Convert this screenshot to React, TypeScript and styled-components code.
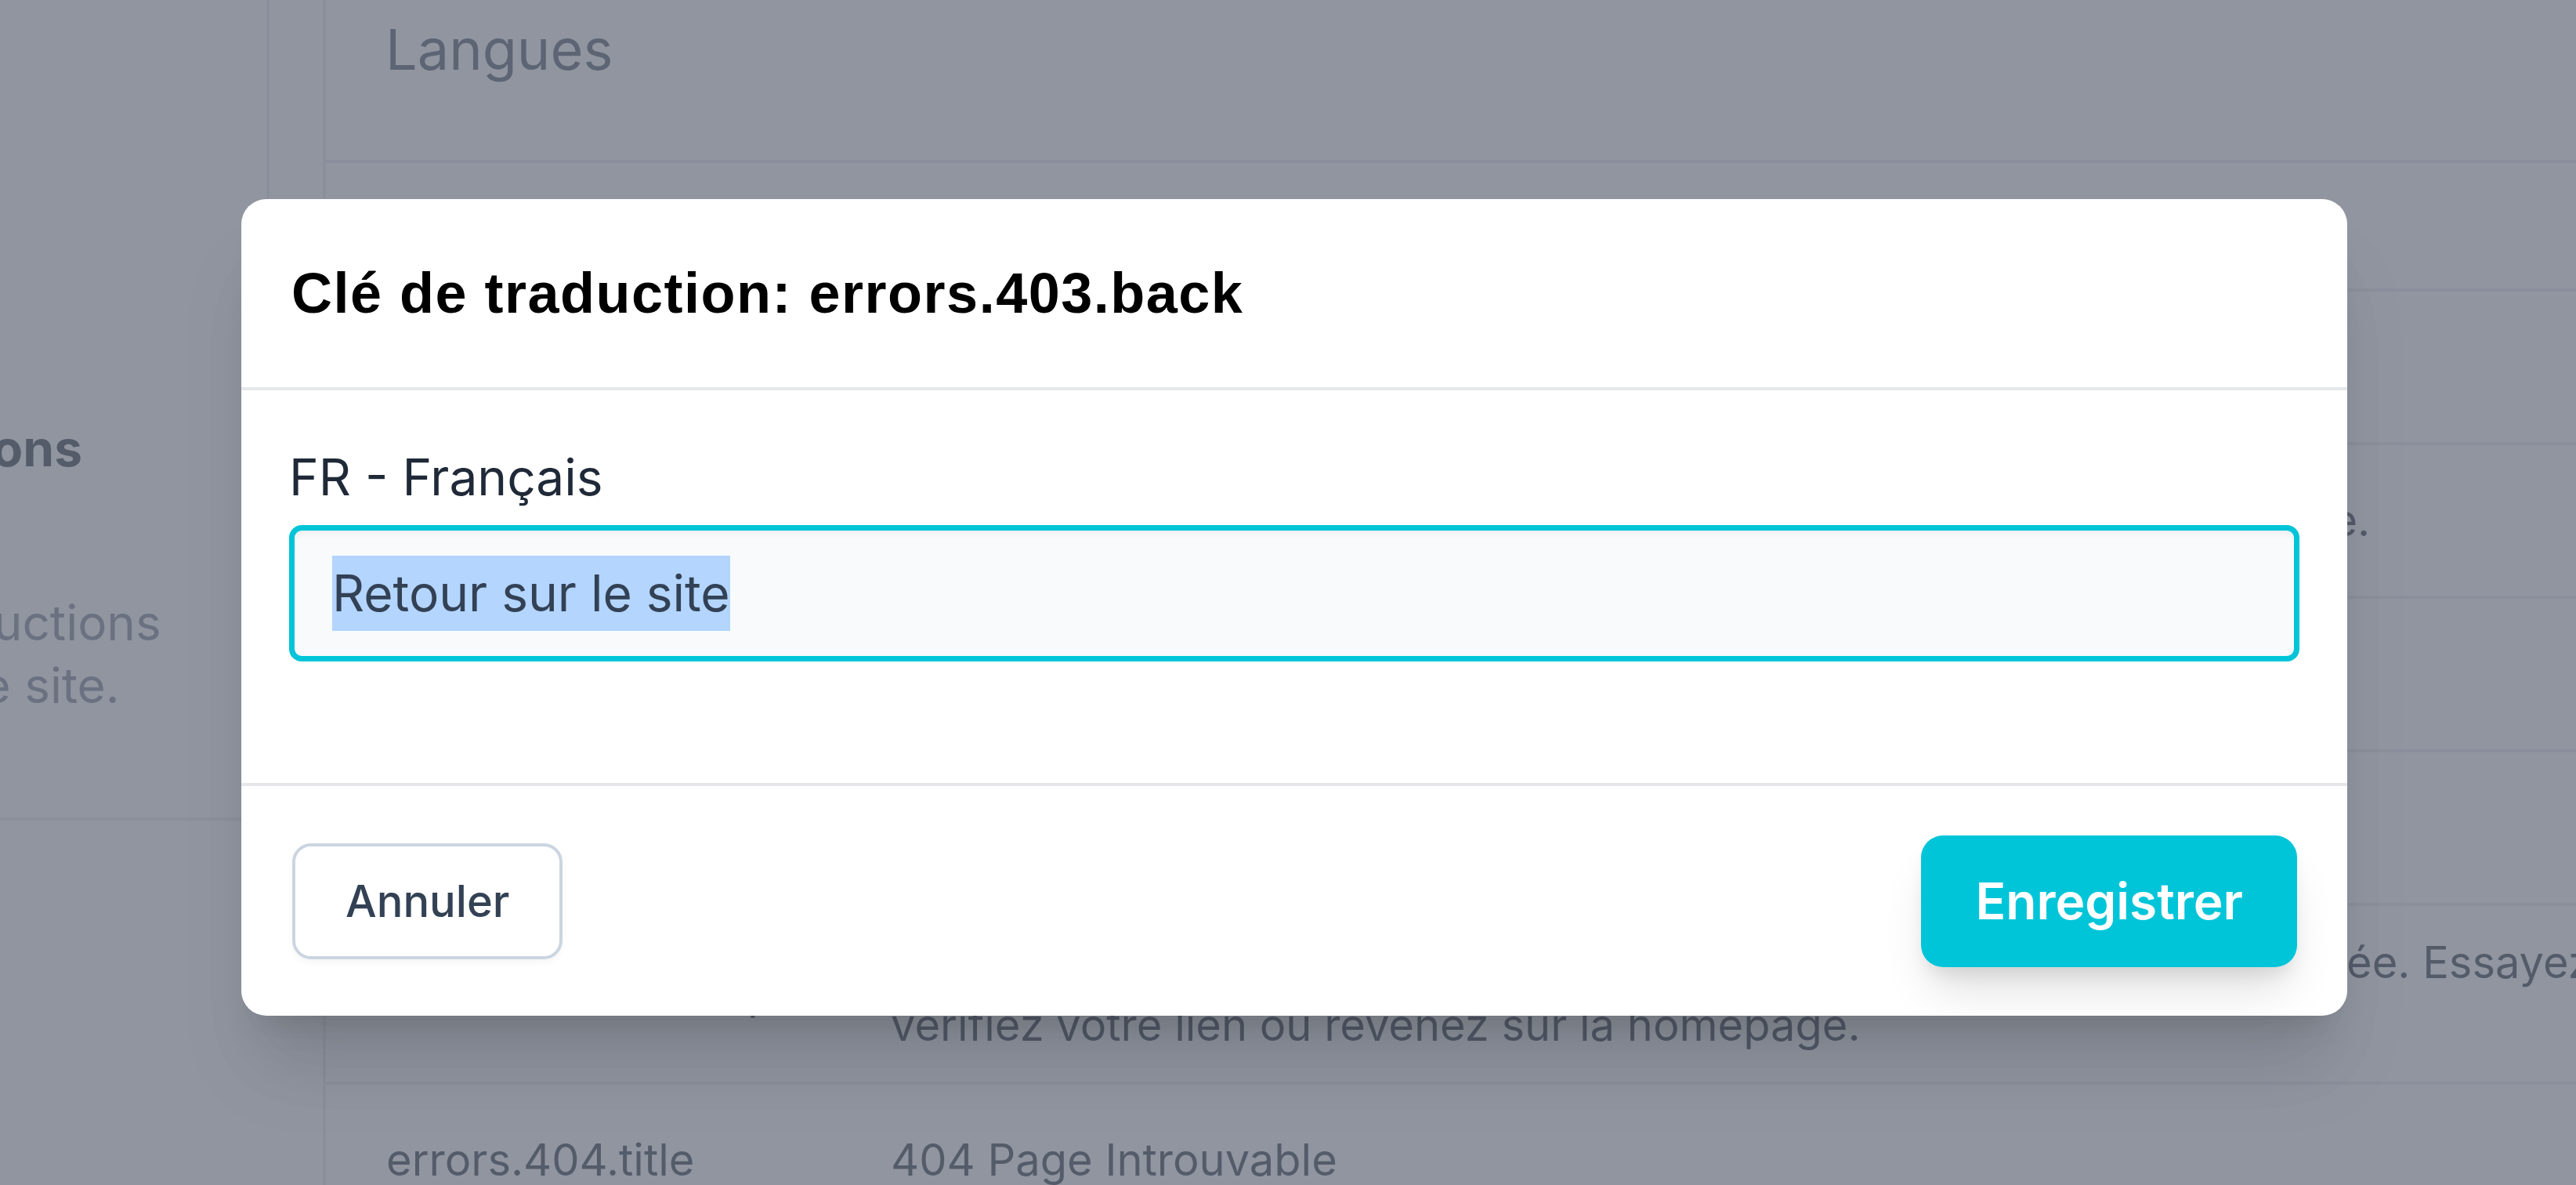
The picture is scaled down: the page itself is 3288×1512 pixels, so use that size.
import React from 'react';
import styled, { createGlobalStyle } from 'styled-components';

const GlobalStyle = createGlobalStyle`
  html, body {
    margin: 0;
    padding: 0;
    overflow: hidden;
    background: #ffffff;
    font-family: Inter, 'Noto Sans', sans-serif;
  }
`;

const Page = styled.div`
  display: flex;
  width: 3288px;
  height: 1512px;
  overflow: hidden;
  background: #ffffff;
`;

const Sidebar = styled.aside`
  flex: 0 0 344px;
  box-sizing: border-box;
  height: 1047px;
  padding-top: 524px;
  border-right: 4px solid #e5e7eb;
  border-bottom: 4px solid #e5e7eb;
  overflow: hidden;
`;

const SidebarInner = styled.div`
  margin-left: -270px;
  width: 700px;
`;

const SidebarTitle = styled.h2`
  margin: 0;
  font-size: 64px;
  line-height: 96px;
  font-weight: 700;
  color: #111827;
`;

const SidebarText = styled.p`
  margin: 135px 0 0 24px;
  font-size: 62px;
  line-height: 80px;
  color: #6b7280;
  white-space: nowrap;
`;

const Table = styled.section`
  flex: 0 0 3100px;
  margin-left: 68px;
  box-sizing: border-box;
  border-left: 4px solid #e5e7eb;
`;

const TableHeader = styled.header`
  box-sizing: border-box;
  height: 208px;
  padding: 9px 0 0 76px;
  border-bottom: 4px solid #e5e7eb;
`;

const HeaderTitle = styled.h1`
  margin: 0;
  font-size: 72px;
  line-height: 108px;
  font-weight: 400;
  color: #374151;
`;

const Row = styled.div<{ $compact?: boolean }>`
  display: flex;
  align-items: center;
  box-sizing: border-box;
  min-height: ${({ $compact }) => ($compact ? '164px' : '196px')};
  padding: 32px 0 32px 77px;
  border-bottom: 4px solid #e5e7eb;
  font-size: 56px;
  line-height: 80px;
  color: #111827;
`;

const KeyCell = styled.div`
  flex: 0 0 644px;
  white-space: nowrap;
`;

const ValueCell = styled.div`
  flex: 1;
  white-space: nowrap;
`;

const Overlay = styled.div`
  position: fixed;
  inset: 0;
  z-index: 10;
  display: flex;
  align-items: flex-start;
  box-sizing: border-box;
  padding: 254px 0 0 308px;
  background: rgba(107, 114, 128, 0.75);
`;

const Modal = styled.div`
  width: 2688px;
  background: #ffffff;
  border-radius: 32px;
  overflow: hidden;
  box-shadow: 0 80px 100px -20px rgba(0, 0, 0, 0.14),
    0 32px 40px -24px rgba(0, 0, 0, 0.12);
`;

const ModalHeader = styled.div`
  display: flex;
  align-items: center;
  height: 240px;
  padding: 0 64px;
  border-bottom: 4px solid #e5e7eb;
`;

const ModalTitle = styled.h3`
  margin: 0;
  font-family: 'Liberation Sans', Arial, sans-serif;
  font-size: 72px;
  line-height: 108px;
  font-weight: 700;
  letter-spacing: 1.5px;
  color: #000000;
`;

const ModalBody = styled.div`
  padding: 63px 61px 155px;
`;

const FieldLabel = styled.label`
  display: block;
  margin-bottom: 13px;
  font-size: 64px;
  line-height: 96px;
  color: #1f2937;
`;

const TextField = styled.div`
  box-sizing: border-box;
  height: 174px;
  padding: 32px 48px;
  border: 7px solid #00c4d8;
  border-radius: 16px;
  background: #f8fafc;
  box-shadow: inset 0 8px 8px -4px rgba(0, 0, 0, 0.05);
  font-size: 64px;
  line-height: 96px;
  color: #334155;
  white-space: nowrap;
`;

const Selected = styled.span`
  display: inline-block;
  background: #b3d5fe;
`;

const ModalFooter = styled.div`
  display: flex;
  align-items: center;
  justify-content: space-between;
  box-sizing: border-box;
  height: 297px;
  padding: 0 64px 0 65px;
  border-top: 4px solid #e5e7eb;
`;

const CancelButton = styled.button`
  box-sizing: border-box;
  height: 148px;
  padding: 0 64px;
  border: 4px solid #cbd5e1;
  border-radius: 24px;
  background: #ffffff;
  box-shadow: 0 4px 8px rgba(0, 0, 0, 0.04);
  font-family: Inter, sans-serif;
  font-size: 56px;
  font-weight: 500;
  color: #334155;
`;

const SaveButton = styled.button`
  box-sizing: border-box;
  height: 168px;
  padding: 0 69px;
  border: none;
  border-radius: 28px;
  background: #00c5d9;
  box-shadow: 0 40px 60px -12px rgba(0, 0, 0, 0.12),
    0 16px 24px -8px rgba(0, 0, 0, 0.1);
  font-family: Inter, sans-serif;
  font-size: 64px;
  font-weight: 600;
  color: #ffffff;
`;

const rows = [
  { key: 'errors.403.title', value: '403 Accès interdit' },
  {
    key: 'errors.403.description',
    value: 'Vous ne disposez pas de droits nécessaires pour accéder à cette page.',
  },
  { key: 'errors.403.back', value: 'Retour sur le site' },
  { key: 'errors.404.back', value: 'Retour sur le site' },
];

export default function App() {
  return (
    <>
      <GlobalStyle />
      <Page>
        <Sidebar>
          <SidebarInner>
            <SidebarTitle>Traductions</SidebarTitle>
            <SidebarText>
              Les traductions
              <br />
              sur votre site.
            </SidebarText>
          </SidebarInner>
        </Sidebar>
        <Table>
          <TableHeader>
            <HeaderTitle>Langues</HeaderTitle>
          </TableHeader>
          <Row $compact>
            <KeyCell>Clé</KeyCell>
            <ValueCell>Valeur</ValueCell>
          </Row>
          {rows.map((row) => (
            <Row key={row.key}>
              <KeyCell>{row.key}</KeyCell>
              <ValueCell>{row.value}</ValueCell>
            </Row>
          ))}
          <Row>
            <KeyCell>errors.404.description</KeyCell>
            <ValueCell>
              Désolé, la page que vous recherchez n'existe plus ou elle a été déplacée. Essayez de nouveau,
              <br />
              vérifiez votre lien ou revenez sur la homepage.
            </ValueCell>
          </Row>
          <Row>
            <KeyCell>errors.404.title</KeyCell>
            <ValueCell>404 Page Introuvable</ValueCell>
          </Row>
        </Table>
      </Page>
      <Overlay>
        <Modal role="dialog">
          <ModalHeader>
            <ModalTitle>Clé de traduction: errors.403.back</ModalTitle>
          </ModalHeader>
          <ModalBody>
            <FieldLabel>FR - Français</FieldLabel>
            <TextField role="textbox">
              <Selected>Retour sur le site</Selected>
            </TextField>
          </ModalBody>
          <ModalFooter>
            <CancelButton>Annuler</CancelButton>
            <SaveButton>Enregistrer</SaveButton>
          </ModalFooter>
        </Modal>
      </Overlay>
    </>
  );
}
